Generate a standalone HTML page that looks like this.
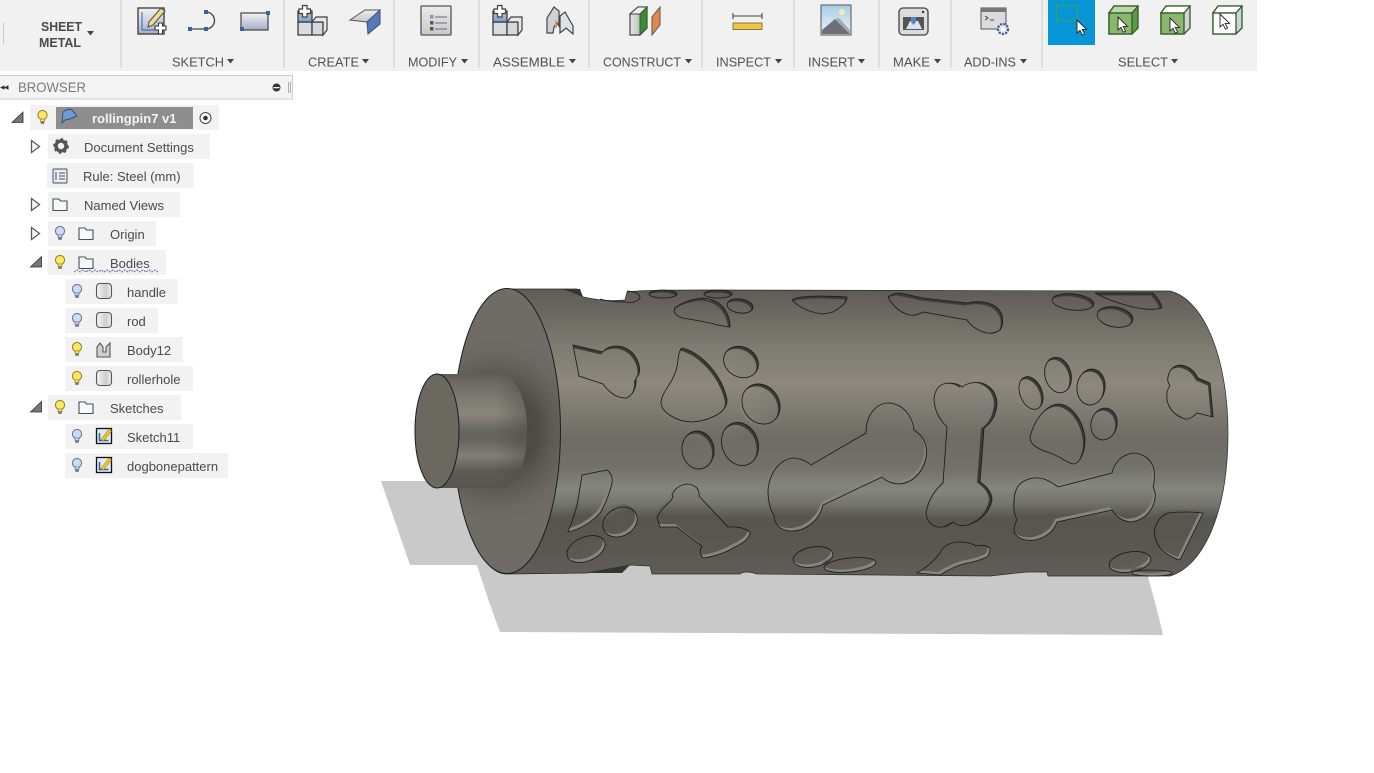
<!DOCTYPE html>
<html><head><meta charset="utf-8"><title>Fusion</title>
<style>
html,body{margin:0;padding:0;background:#fff;width:1374px;height:773px;overflow:hidden}
svg{display:block;position:absolute;left:0;top:0}
text{font-family:"Liberation Sans",sans-serif}
.t{font-size:13px;fill:#505050}
.b{font-size:13px;fill:#4a4a4a}
.r{fill:#f2f2f2}
.cut{fill:#3b3a35}
.ln{fill:none;stroke:#1b1b19;stroke-width:.85}
</style></head><body>
<svg width="1374" height="773" viewBox="0 0 1374 773">
<defs>
<linearGradient id="body" gradientUnits="userSpaceOnUse" x1="0" y1="289" x2="0" y2="576">
<stop offset="0" stop-color="#5e5b54"/><stop offset=".05" stop-color="#66635c"/><stop offset=".12" stop-color="#716e66"/><stop offset=".2" stop-color="#7e7b71"/><stop offset=".33" stop-color="#8c887e"/><stop offset=".43" stop-color="#7d7a71"/><stop offset=".52" stop-color="#6e6c64"/><stop offset=".62" stop-color="#71706a"/><stop offset=".7" stop-color="#84867f"/><stop offset=".75" stop-color="#74756e"/><stop offset=".8" stop-color="#575550"/><stop offset=".9" stop-color="#595750"/><stop offset="1" stop-color="#605e57"/>
</linearGradient>
<radialGradient id="cap" gradientUnits="userSpaceOnUse" cx="495" cy="431" r="92">
<stop offset="0" stop-color="#484641"/><stop offset=".45" stop-color="#4d4b46"/><stop offset=".65" stop-color="#5e5c56"/><stop offset=".85" stop-color="#6a6860"/><stop offset="1" stop-color="#6e6c64"/>
</radialGradient>
<linearGradient id="pin" gradientUnits="userSpaceOnUse" x1="0" y1="374" x2="0" y2="488">
<stop offset="0" stop-color="#5e5c56"/><stop offset=".06" stop-color="#6a6861"/><stop offset=".22" stop-color="#7e7b72"/><stop offset=".35" stop-color="#8a867d"/><stop offset=".5" stop-color="#676560"/><stop offset=".58" stop-color="#66645e"/><stop offset=".72" stop-color="#80807a"/><stop offset=".84" stop-color="#5e5c56"/><stop offset="1" stop-color="#565550"/>
</linearGradient>
<linearGradient id="pinEnd" gradientUnits="userSpaceOnUse" x1="495" y1="0" x2="527" y2="0">
<stop offset="0" stop-color="#46443f" stop-opacity="0"/><stop offset="1" stop-color="#46443f" stop-opacity=".45"/>
</linearGradient>
<linearGradient id="g1" x1="0" y1="0" x2="0" y2="1"><stop offset="0" stop-color="#f2f2f4"/><stop offset="1" stop-color="#a4aec6"/></linearGradient>
<linearGradient id="g2" x1="0" y1="0" x2="1" y2="0"><stop offset="0" stop-color="#f5f5f5"/><stop offset=".65" stop-color="#cdcdcd"/><stop offset="1" stop-color="#f2f2f2"/></linearGradient>
<linearGradient id="g3" x1="0" y1="0" x2="0" y2="1"><stop offset="0" stop-color="#b6c8e2"/><stop offset="1" stop-color="#7c9ccb"/></linearGradient>
<linearGradient id="g4" x1="0" y1="0" x2="1" y2="0"><stop offset="0" stop-color="#e8e8e8"/><stop offset="1" stop-color="#9d9d9d"/></linearGradient>
<linearGradient id="g5" x1="0" y1="0" x2="0" y2="1"><stop offset="0" stop-color="#ececec"/><stop offset="1" stop-color="#c9c9c9"/></linearGradient>
<linearGradient id="sky" x1="0" y1="0" x2="0" y2="1"><stop offset="0" stop-color="#a6cdea"/><stop offset="1" stop-color="#eef3f5"/></linearGradient>

<g id="blueb"><circle cx="0" cy="-2" r="4.600" fill="#ccdaf4" stroke="#6a7896" stroke-width="1.100"/><path d="M-2.200 2h4.400l-.4 2.500h-3.600z" fill="#ccdaf4" stroke="#6a7896" stroke-width=".8"/><rect x="-1.800" y="4.500" width="3.600" height="2.300" fill="#6f7686"/></g>
<g id="yelb"><circle cx="0" cy="-2" r="4.600" fill="#fbe85e" stroke="#95862f" stroke-width="1.100"/><path d="M-2.200 2h4.400l-.4 2.500h-3.600z" fill="#fbe85e" stroke="#95862f" stroke-width=".8"/><rect x="-1.800" y="4.500" width="3.600" height="2.300" fill="#77735f"/></g>
<path id="fold" d="M-7 -6h6l1.500 2h6.500v9.500h-14z" fill="#f6f8fb" stroke="#4a4f58" stroke-width="1.100"/>
<g id="cyl"><rect x="-7.500" y="-7.500" width="15" height="15" rx="3.500" fill="url(#g2)" stroke="#555" stroke-width="1.100"/></g>
<g id="ske"><rect x="-7.500" y="-7.500" width="15" height="15" fill="#dfe8f6" stroke="#111" stroke-width="1.300"/><path d="M-4.500 -3v7.500h9" fill="none" stroke="#2f5ea8" stroke-width="1.500"/><path d="M-3 3.500L5 -7l2.500 2L-.5 5z" fill="#f2c522" stroke="#a8861a" stroke-width=".6"/></g>
<g id="cur"><path d="M0 0v13l3-2.700 2.400 4.900 2.200-1.100-2.400-4.700h4.300z" fill="#fff" stroke="#222" stroke-width=".9"/></g>
<path id="tri" d="M0 0h7l-3.500 4.500z" fill="#444"/>
<path id="exp" d="M-4 -6l8 6-8 6z" fill="#fafafa" stroke="#5a5a5a" stroke-width="1.300"/>
<path id="col" d="M5.500 -5.500v10.500h-11z" fill="#777" stroke="#333" stroke-width=".8"/>

<g id="boxes">
<rect x="0" y="16" width="14" height="13" fill="#d9dde2" stroke="#3f3f3f" stroke-width="1.300"/>
<rect x="14" y="16" width="11" height="13" fill="#d5d9de" stroke="#3f3f3f" stroke-width="1.300"/>
<path d="M14 16l4-5h11v13l-4 5V16z" fill="#e6e8eb" stroke="#3f3f3f" stroke-width="1.200"/>
<rect x="0" y="5" width="14" height="11" fill="url(#g3)" stroke="#3f3f3f" stroke-width="1.300"/>
<path d="M1 3h3.500v-3.500h4.500v3.500h3.500v4.500h-3.500v3.500h-4.500v-3.500h-3.500z" fill="#fff" stroke="#3f3f3f" stroke-width="1.200"/>
</g>

<path id="a1" d="M573 345L603 352Q607 346 618 346Q634 348 639 365Q641 374 636 378Q637 392 627 398Q614 399 603 384L579 376Z"/>
<path id="a2" d="M682 348C700 352 722 374 727 400C727 412 712 420 693 422C676 422 661 412 661 402C662 390 676 382 678 360Q679 350 682 348Z"/>
<path id="a3" d="M888 297Q892 293 900 293L923 298L967 303Q974 301 983 302Q998 304 1002 315Q1004 324 1000 330Q994 334 987 333Q974 330 967 320L923 312Q916 316 910 315Q896 312 888 297Z"/>
<path id="a4" d="M675 308Q684 300 703 298Q716 299 723 307Q730 316 730 327Q720 326 710 323Q696 320 682 318Q672 314 675 308Z"/>
<path id="a5" d="M934 398Q936 384 948 383Q958 383 962 387Q970 381 982 383Q996 388 997 403Q996 420 984 428L980 482Q992 490 992 500Q988 518 968 525Q958 527 953 522Q946 528 938 527Q926 524 926 512Q930 494 943 483L947 427Q934 414 934 398Z"/>
<path id="a6" d="M1030 437C1034 420 1046 405 1058 404C1072 404 1084 422 1085 440C1085 452 1080 463 1074 464C1068 464 1060 456 1050 453C1038 449 1030 445 1030 437Z"/>
<path id="a7" d="M1168 377Q1170 366 1180 365Q1192 366 1198 378L1210 383L1213 417L1197 413Q1190 420 1185 419Q1170 414 1167 400Q1166 390 1170 386Q1167 382 1168 377Z"/>
<path id="b1" d="M768 490C770 470 782 458 795 458Q806 460 811 465L866 433C866 415 876 403 889 403C902 404 912 414 914 430C924 436 928 446 926 458C922 475 910 484 898 484Q888 483 882 477L823 505C820 520 805 532 790 531C778 530 774 522 774 515C770 510 768 500 768 490Z"/>
<path id="b2" d="M1014 503Q1014 486 1024 481Q1034 476 1044 479Q1052 482 1058 487L1112 473Q1116 456 1133 453Q1150 454 1154 470Q1155 482 1153 487Q1157 494 1154 503Q1148 520 1130 522Q1118 520 1112 510L1057 522Q1052 536 1035 540Q1020 542 1014 532Q1014 524 1017 520Q1013 512 1014 503Z"/>
<path id="b3" d="M657 518C662 505 676 500 672 495Q676 485 688 484Q700 486 699 496L728 527Q742 526 750 532Q750 540 735 547Q720 556 703 558Q698 552 702 546L677 527L660 527Z"/>
<path id="b4" d="M582 475L607 470Q613 474 612 483Q608 500 600 513Q586 528 568 532Q576 512 578 500Z"/>
<path id="b5" d="M1203 513L1180 560Q1166 556 1158 545Q1152 534 1156 525Q1160 516 1168 513Q1186 511 1203 513Z"/>
<path id="b6" d="M917 573Q930 566 940 553Q945 542 960 542Q970 542 976 546Q984 544 990 548Q990 554 987 557Q976 562 967 563Q954 566 940 575Z"/>
<path id="b7" d="M1095 293H1153Q1160 300 1162 308Q1150 311 1133 307Q1112 302 1095 293Z"/>
<path id="b8" d="M792 300Q800 294 847 297Q847 304 833 312Q822 315 817 313Q802 310 792 300Z"/>
<ellipse id="e1" cx="741" cy="362" rx="18" ry="15" transform="rotate(28 741 362)"/>
<ellipse id="e2" cx="761" cy="404" rx="18" ry="21" transform="rotate(-35 761 404)"/>
<ellipse id="e3" cx="740" cy="444" rx="18" ry="22" transform="rotate(-20 740 444)"/>
<ellipse id="e4" cx="698" cy="450" rx="16" ry="19" transform="rotate(-8 698 450)"/>
<ellipse id="e5" cx="620" cy="522" rx="18" ry="14" transform="rotate(-28 620 522)"/>
<ellipse id="e6" cx="586" cy="549" rx="20" ry="12" transform="rotate(-22 586 549)"/>
<ellipse id="e7" cx="1031" cy="393" rx="11" ry="17" transform="rotate(-22 1031 393)"/>
<ellipse id="e8" cx="1058" cy="375" rx="13" ry="18" transform="rotate(-15 1058 375)"/>
<ellipse id="e9" cx="1091" cy="387" rx="14" ry="18" transform="rotate(8 1091 387)"/>
<ellipse id="e10" cx="1104" cy="424" rx="13" ry="16" transform="rotate(12 1104 424)"/>
<ellipse id="e11" cx="740" cy="306" rx="13" ry="7" transform="rotate(8 740 306)"/>
<ellipse id="e12" cx="663" cy="294" rx="14" ry="4"/>
<ellipse id="e13" cx="718" cy="294" rx="14" ry="4"/>
<ellipse id="e14" cx="1073" cy="302" rx="21" ry="8" transform="rotate(6 1073 302)"/>
<ellipse id="e15" cx="1115" cy="317" rx="18" ry="10" transform="rotate(10 1115 317)"/>
<ellipse id="e16" cx="813" cy="557" rx="20" ry="10" transform="rotate(-10 813 557)"/>
<ellipse id="e17" cx="850" cy="565" rx="26" ry="7" transform="rotate(-6 850 565)"/>
<ellipse id="e18" cx="1130" cy="562" rx="21" ry="10" transform="rotate(-10 1130 562)"/>
<ellipse id="e19" cx="1152" cy="573" rx="20" ry="3"/>
</defs>

<!-- toolbar -->
<rect x="0" y="0" width="1257" height="71" fill="#f1f1f1"/>
<g fill="#dedede">
<rect x="3" y="22" width="1" height="22" fill="#c8c8c8"/>
<rect x="120" y="0" width="2" height="68"/><rect x="283" y="0" width="2" height="68"/><rect x="393" y="0" width="2" height="68"/><rect x="478" y="0" width="2" height="68"/><rect x="588" y="0" width="2" height="68"/><rect x="701" y="0" width="2" height="68"/><rect x="793" y="0" width="2" height="68"/><rect x="878" y="0" width="2" height="68"/><rect x="950" y="0" width="2" height="68"/><rect x="1041" y="0" width="2" height="68"/>
</g>
<text x="41" y="31" textLength="41" lengthAdjust="spacingAndGlyphs" font-weight="700" fill="#4a4a4a" style="font-size:13px">SHEET</text>
<text x="39" y="47" textLength="42" lengthAdjust="spacingAndGlyphs" font-weight="700" fill="#4a4a4a" style="font-size:13px">METAL</text>
<use href="#tri" x="87" y="31"/>
<text class="t" x="172" y="66.500" textLength="52" lengthAdjust="spacingAndGlyphs">SKETCH</text><use href="#tri" x="227" y="59"/>
<text class="t" x="308" y="66.500" textLength="51" lengthAdjust="spacingAndGlyphs">CREATE</text><use href="#tri" x="362" y="59"/>
<text class="t" x="408" y="66.500" textLength="49" lengthAdjust="spacingAndGlyphs">MODIFY</text><use href="#tri" x="461" y="59"/>
<text class="t" x="493" y="66.500" textLength="72" lengthAdjust="spacingAndGlyphs">ASSEMBLE</text><use href="#tri" x="569" y="59"/>
<text class="t" x="603" y="66.500" textLength="78" lengthAdjust="spacingAndGlyphs">CONSTRUCT</text><use href="#tri" x="685" y="59"/>
<text class="t" x="716" y="66.500" textLength="55" lengthAdjust="spacingAndGlyphs">INSPECT</text><use href="#tri" x="775" y="59"/>
<text class="t" x="808" y="66.500" textLength="47" lengthAdjust="spacingAndGlyphs">INSERT</text><use href="#tri" x="858" y="59"/>
<text class="t" x="893" y="66.500" textLength="37" lengthAdjust="spacingAndGlyphs">MAKE</text><use href="#tri" x="934" y="59"/>
<text class="t" x="964" y="66.500" textLength="52" lengthAdjust="spacingAndGlyphs">ADD-INS</text><use href="#tri" x="1020" y="59"/>
<text class="t" x="1118" y="66.500" textLength="50" lengthAdjust="spacingAndGlyphs">SELECT</text><use href="#tri" x="1171" y="59"/>

<!-- sketch icons -->
<rect x="138" y="8" width="26" height="26" fill="url(#g1)" stroke="#444" stroke-width="1.400"/>
<path d="M142 12v18h18" fill="none" stroke="#3a5fa8"/>
<path d="M149 22l12-14 4 3-12 14-5 2z" fill="#f3dc90" stroke="#555" stroke-width="1.100"/>
<path d="M155 26h3.500v-3h4v3h3.500v4h-3.500v4h-4v-4h-3.500z" fill="#fff" stroke="#333" stroke-width="1.100"/>
<path d="M189 29h17a8.500 8.500 0 0 0 0-17" fill="none" stroke="#444" stroke-width="1.300"/>
<rect x="188" y="27" width="4" height="4" fill="#3c5fa8"/><rect x="204" y="27" width="4" height="4" fill="#3c5fa8"/><rect x="204" y="10" width="4" height="4" fill="#3c5fa8"/>
<rect x="241" y="13" width="27" height="17" fill="url(#g1)" stroke="#444" stroke-width="1.200"/>
<rect x="266" y="11" width="4" height="4" fill="#3c5fa8"/><rect x="240" y="27" width="4" height="4" fill="#3c5fa8"/>
<use href="#boxes" x="298" y="6"/>
<path d="M350 20l15-10h15l-13 12z" fill="url(#g5)" stroke="#555"/>
<path d="M367 22l13-12v14l-12 10z" fill="#5578b8" stroke="#3b4f7a"/>
<rect x="421" y="6" width="30" height="29" rx="1" fill="url(#g5)" stroke="#555" stroke-width="1.300"/>
<rect x="430" y="15" width="3.500" height="3.500" fill="#6c9de0"/><rect x="430" y="21" width="3.500" height="3.500" fill="#555"/><rect x="430" y="27" width="3.500" height="3.500" fill="#555"/>
<path d="M435 17h12M435 23h12M435 29h12" stroke="#667" fill="none"/>
<use href="#boxes" x="493" y="6"/>
<path d="M547 33V18l7-11 5 4v15l-2-3-3 4-1 6z" fill="#cfd2d8" stroke="#444" stroke-width="1.200"/>
<path d="M560 33V16l5-4 8 14v8l-7-6z" fill="#dde0e5" stroke="#444" stroke-width="1.200"/>
<path d="M556 20v8" stroke="#e0963a" stroke-width="1.500"/>
<path d="M630 14l8-7h9v21l-7 7h-10z" fill="url(#g4)" stroke="#444" stroke-width="1.200"/>
<path d="M630 14l8-7h9l-7 7z" fill="#eeeeee" stroke="#444" stroke-width="1"/>
<path d="M640 14l7-7v21l-7 7z" fill="#3f8a3a" stroke="#2f5a24"/>
<path d="M652 35V17l8-10v18z" fill="#e28a4c" stroke="#555"/>
<path d="M733 16h29M733 13v6M762 13v6" stroke="#444" fill="none" stroke-width="1.100"/>
<rect x="733" y="23" width="29" height="6.500" fill="#eec64a" stroke="#8c7a3a"/>
<rect x="821" y="5" width="30" height="30" fill="url(#sky)" stroke="#555"/>
<circle cx="842" cy="12" r="3" fill="#f5edb0"/>
<path d="M822 30l13-11 15 15H822z" fill="#6d7078"/><path d="M835 19l4-1 11 12v4z" fill="#a5a8ae"/>
<rect x="899" y="8" width="29" height="27" rx="4" fill="#dcdcdc" stroke="#444" stroke-width="1.300"/>
<rect x="903" y="17" width="21" height="13" fill="#555"/><path d="M906 29l4-8h8l4 8z" fill="#dbe2ee"/><path d="M911 17h5v5l-2.500 3-2.500-3z" fill="#4f86c6"/><circle cx="923" cy="12" r="1.200" fill="#333"/>
<rect x="981" y="8" width="25" height="21" fill="#dadcdf" stroke="#555"/><rect x="981" y="8" width="25" height="4" fill="#777"/>
<path d="M985 16l3 2-3 2M990 20h4" stroke="#444" fill="none"/>
<circle cx="1003" cy="29" r="5" fill="#dfe6f2" stroke="#3c5a8a" stroke-width="2.200" stroke-dasharray="2.200 1.200"/>
<circle cx="1003" cy="29" r="2" fill="#fff"/>

<!-- select -->
<rect x="1048" y="0" width="47" height="45" fill="#0696d7"/>
<rect x="1056.500" y="5.500" width="21" height="15" fill="none" stroke="#3aa35a" stroke-width="1.300"/>
<use href="#cur" x="1077" y="20"/>
<g stroke="#2f5a24" stroke-width="1.300">
<path d="M1109 13l5-7h24v22l-6 6h-23z" fill="#5f9a44"/><path d="M1109 13l5-7h24l-6 7z" fill="#bcd8a6"/><rect x="1109" y="13" width="23" height="21" fill="#8cb56e"/>
<path d="M1161 13l5-7h24v22l-6 6h-23z" fill="#cfd4de"/><path d="M1161 13l5-7h24l-6 7z" fill="#fff"/><rect x="1161" y="13" width="23" height="21" fill="#8cb56e"/>
<path d="M1213 13l5-7h24v22l-6 6h-23z" fill="#cfd4de"/><path d="M1213 13l5-7h24l-6 7z" fill="#fff"/><rect x="1213" y="13" width="23" height="21" fill="#fff"/>
</g>
<use href="#cur" x="1118" y="17"/><use href="#cur" x="1170" y="18"/><use href="#cur" x="1220" y="14"/>

<!-- browser -->
<rect x="-1" y="75.500" width="293.500" height="23.500" fill="#f4f4f4" stroke="#cccccc"/>
<path d="M4 86v3l-3-1.500zM8 86v3l-3-1.500z" fill="#333" stroke="#333"/>
<text x="18" y="92" textLength="68" lengthAdjust="spacingAndGlyphs" fill="#7a7a7a" style="font-size:14px">BROWSER</text>
<circle cx="276.500" cy="87.500" r="4" fill="#333"/><rect x="273.500" y="87" width="6" height="1.300" fill="#fff"/>
<path d="M288.500 82v11M290.500 82v11" stroke="#aaa"/>

<!-- tree rows -->
<rect class="r" x="30" y="105" width="189" height="25"/>
<rect x="56" y="107" width="137" height="22" fill="#8e8e8e"/>
<rect class="r" x="48" y="134" width="162" height="25"/>
<rect class="r" x="47" y="163" width="147" height="25"/>
<rect class="r" x="48" y="192" width="132" height="25"/>
<rect class="r" x="48" y="221" width="108" height="25"/>
<rect class="r" x="48" y="250" width="118" height="25"/>
<rect class="r" x="65" y="279" width="113" height="25"/>
<rect class="r" x="65" y="308" width="93" height="25"/>
<rect class="r" x="65" y="337" width="118" height="25"/>
<rect class="r" x="65" y="366" width="128" height="25"/>
<rect class="r" x="48" y="395" width="133" height="25"/>
<rect class="r" x="65" y="424" width="128" height="25"/>
<rect class="r" x="65" y="453" width="163" height="25"/>

<use href="#col" x="17.500" y="117.500"/>
<use href="#yelb" x="42.500" y="117"/>
<path d="M62 123l1-11q5-4 9-2l5 6-7 3-5 1z" fill="#6d9ad6" stroke="#3c4f70"/>
<text x="92" y="123" font-weight="700" fill="#f4f4f4" style="font-size:13px">rollingpin7 v1</text>
<circle cx="205.500" cy="118" r="5.500" fill="#fff" stroke="#444"/><circle cx="205.500" cy="118" r="2.300" fill="#333"/>

<use href="#exp" x="35.500" y="146.500"/>
<circle cx="61" cy="146" r="5" fill="none" stroke="#555" stroke-width="3.500"/><circle cx="61" cy="146" r="7" fill="none" stroke="#555" stroke-width="1.800" stroke-dasharray="2.400 3"/>
<text class="b" x="84" y="152">Document Settings</text>
<rect x="53" y="169" width="14" height="14" rx="1" fill="#e6ecf4" stroke="#4a5058"/><path d="M56 172v8M59 173h6M59 176h6M59 179h6" stroke="#4a5058" fill="none"/>
<text class="b" x="83" y="181">Rule: Steel (mm)</text>
<use href="#exp" x="35.500" y="204.500"/><use href="#fold" x="60" y="205"/>
<text class="b" x="84" y="210">Named Views</text>
<use href="#exp" x="35.500" y="233.500"/><use href="#blueb" x="60" y="233"/><use href="#fold" x="86" y="234"/>
<text class="b" x="110" y="239">Origin</text>
<use href="#col" x="36" y="262"/><use href="#yelb" x="60" y="262"/><use href="#fold" x="86" y="263"/>
<text class="b" x="110" y="268">Bodies</text>
<path d="M74 272l3-2 3 2 3-2 3 2 3-2 3 2 3-2 3 2 3-2 3 2 3-2 3 2 3-2 3 2 3-2 3 2 3-2 3 2 3-2 3 2 3-2 3 2 3-2 3 2 3-2 3 2 3-2 3 2" fill="none" stroke="#5a6d9a" stroke-dasharray="2 1"/>
<use href="#blueb" x="77" y="291"/><use href="#cyl" x="104" y="291"/><text class="b" x="127" y="297">handle</text>
<use href="#blueb" x="77" y="320"/><use href="#cyl" x="104" y="320"/><text class="b" x="127" y="326">rod</text>
<use href="#yelb" x="77" y="349"/><path d="M97 357v-10l3-4 3 4v5h3v-5l4-4v14h-13z" fill="#cfcfcf" stroke="#555" stroke-width="1.100"/><text class="b" x="127" y="355">Body12</text>
<use href="#yelb" x="77" y="378"/><use href="#cyl" x="104" y="378"/><text class="b" x="127" y="384">rollerhole</text>
<use href="#col" x="36" y="407"/><use href="#yelb" x="60" y="407"/><use href="#fold" x="86" y="408"/>
<text class="b" x="110" y="413">Sketches</text>
<use href="#blueb" x="77" y="436"/><use href="#ske" x="104" y="436"/><text class="b" x="127" y="442">Sketch11</text>
<use href="#blueb" x="77" y="465"/><use href="#ske" x="104" y="465"/><text class="b" x="127" y="471">dogbonepattern</text>

<!-- shadows -->
<path d="M381 481H495V560H1143Q1155 600 1163 635L500 632Q488 600 477 565H410Z" fill="#c9c9c9"/>

<!-- body -->
<path d="M506 289H577L583 297Q605 302 625 300L627 292Q640 290 700 290L1170 291C1205 300 1228 360 1228 433C1228 510 1205 565 1170 576L1048 576L1047 572L1027 572L990 576L757 574Q745 570 740 574L652 574L650 566L630 565L587 573L506 574C480 574 454 510 454 431C454 350 480 289 506 289Z" fill="url(#body)" stroke="#2a2a27" stroke-width=".7"/>
<path d="M561 289H580L583 297Q572 292 561 289Z" fill="#35342f"/>
<path d="M627 291Q640 292 640 298Q636 304 625 302Q610 302 600 299" fill="none" stroke="#1b1b19" stroke-width=".8"/>
<path d="M587 573L630 565L622 573Z" fill="#35342f"/>
<ellipse cx="507" cy="431" rx="53.500" ry="142.500" fill="url(#cap)" stroke="#1d1d1b" stroke-width="1"/>

<!-- pin -->
<path d="M437 374H505Q527 388 527 431Q527 475 505 488H437Z" fill="url(#pin)"/>
<path d="M495 374H505Q527 388 527 431Q527 475 505 488H495Z" fill="url(#pinEnd)"/>
<ellipse cx="437" cy="431" rx="22" ry="57" fill="#6b695f" stroke="#1d1d1b" stroke-width="1"/>

<!-- upper cuts: wall on top/right -->
<g class="cut">
<use href="#a1"/><use href="#a2"/><use href="#a3"/><use href="#a4"/><use href="#a5"/><use href="#a6"/><use href="#a7"/><use href="#b8"/><use href="#b7"/>
<use href="#e1"/><use href="#e2"/><use href="#e3"/><use href="#e4"/><use href="#e7"/><use href="#e8"/><use href="#e9"/><use href="#e10"/><use href="#e11"/><use href="#e12"/><use href="#e13"/><use href="#e14"/><use href="#e15"/>
</g>
<g fill="url(#body)" transform="translate(-2,2.500)">
<use href="#a1"/><use href="#a2"/><use href="#a3"/><use href="#a4"/><use href="#a6"/><use href="#e1"/><use href="#e2"/><use href="#e3"/><use href="#e4"/><use href="#e7"/><use href="#e8"/><use href="#e9"/><use href="#e10"/><use href="#e11"/><use href="#e12"/><use href="#e13"/><use href="#e14"/><use href="#e15"/><use href="#a7"/><use href="#b8"/><use href="#b7"/>
</g>
<g fill="url(#body)" transform="translate(-3,.5)"><use href="#a5"/></g>
<!-- lower cuts: wall on bottom/right -->
<g fill="#85857e">
<use href="#b1"/><use href="#b2"/><use href="#b3"/><use href="#b4"/><use href="#b5"/><use href="#b6"/><use href="#e5"/><use href="#e6"/><use href="#e16"/><use href="#e17"/><use href="#e18"/><use href="#e19"/>
</g>
<g fill="url(#body)" transform="translate(-2,-3)">
<use href="#b1"/><use href="#b2"/><use href="#b3"/><use href="#b4"/><use href="#b5"/><use href="#b6"/><use href="#e5"/><use href="#e6"/><use href="#e16"/><use href="#e17"/><use href="#e18"/><use href="#e19"/>
</g>
<g class="ln">
<use href="#a1"/><use href="#a2"/><use href="#a3"/><use href="#a4"/><use href="#a5"/><use href="#a6"/><use href="#a7"/><use href="#b1"/><use href="#b2"/><use href="#b3"/><use href="#b4"/><use href="#b5"/><use href="#b6"/><use href="#b7"/><use href="#b8"/>
<use href="#e1"/><use href="#e2"/><use href="#e3"/><use href="#e4"/><use href="#e5"/><use href="#e6"/><use href="#e7"/><use href="#e8"/><use href="#e9"/><use href="#e10"/><use href="#e11"/><use href="#e12"/><use href="#e13"/><use href="#e14"/><use href="#e15"/><use href="#e16"/><use href="#e17"/><use href="#e18"/><use href="#e19"/>
</g>
</svg>
</body></html>
